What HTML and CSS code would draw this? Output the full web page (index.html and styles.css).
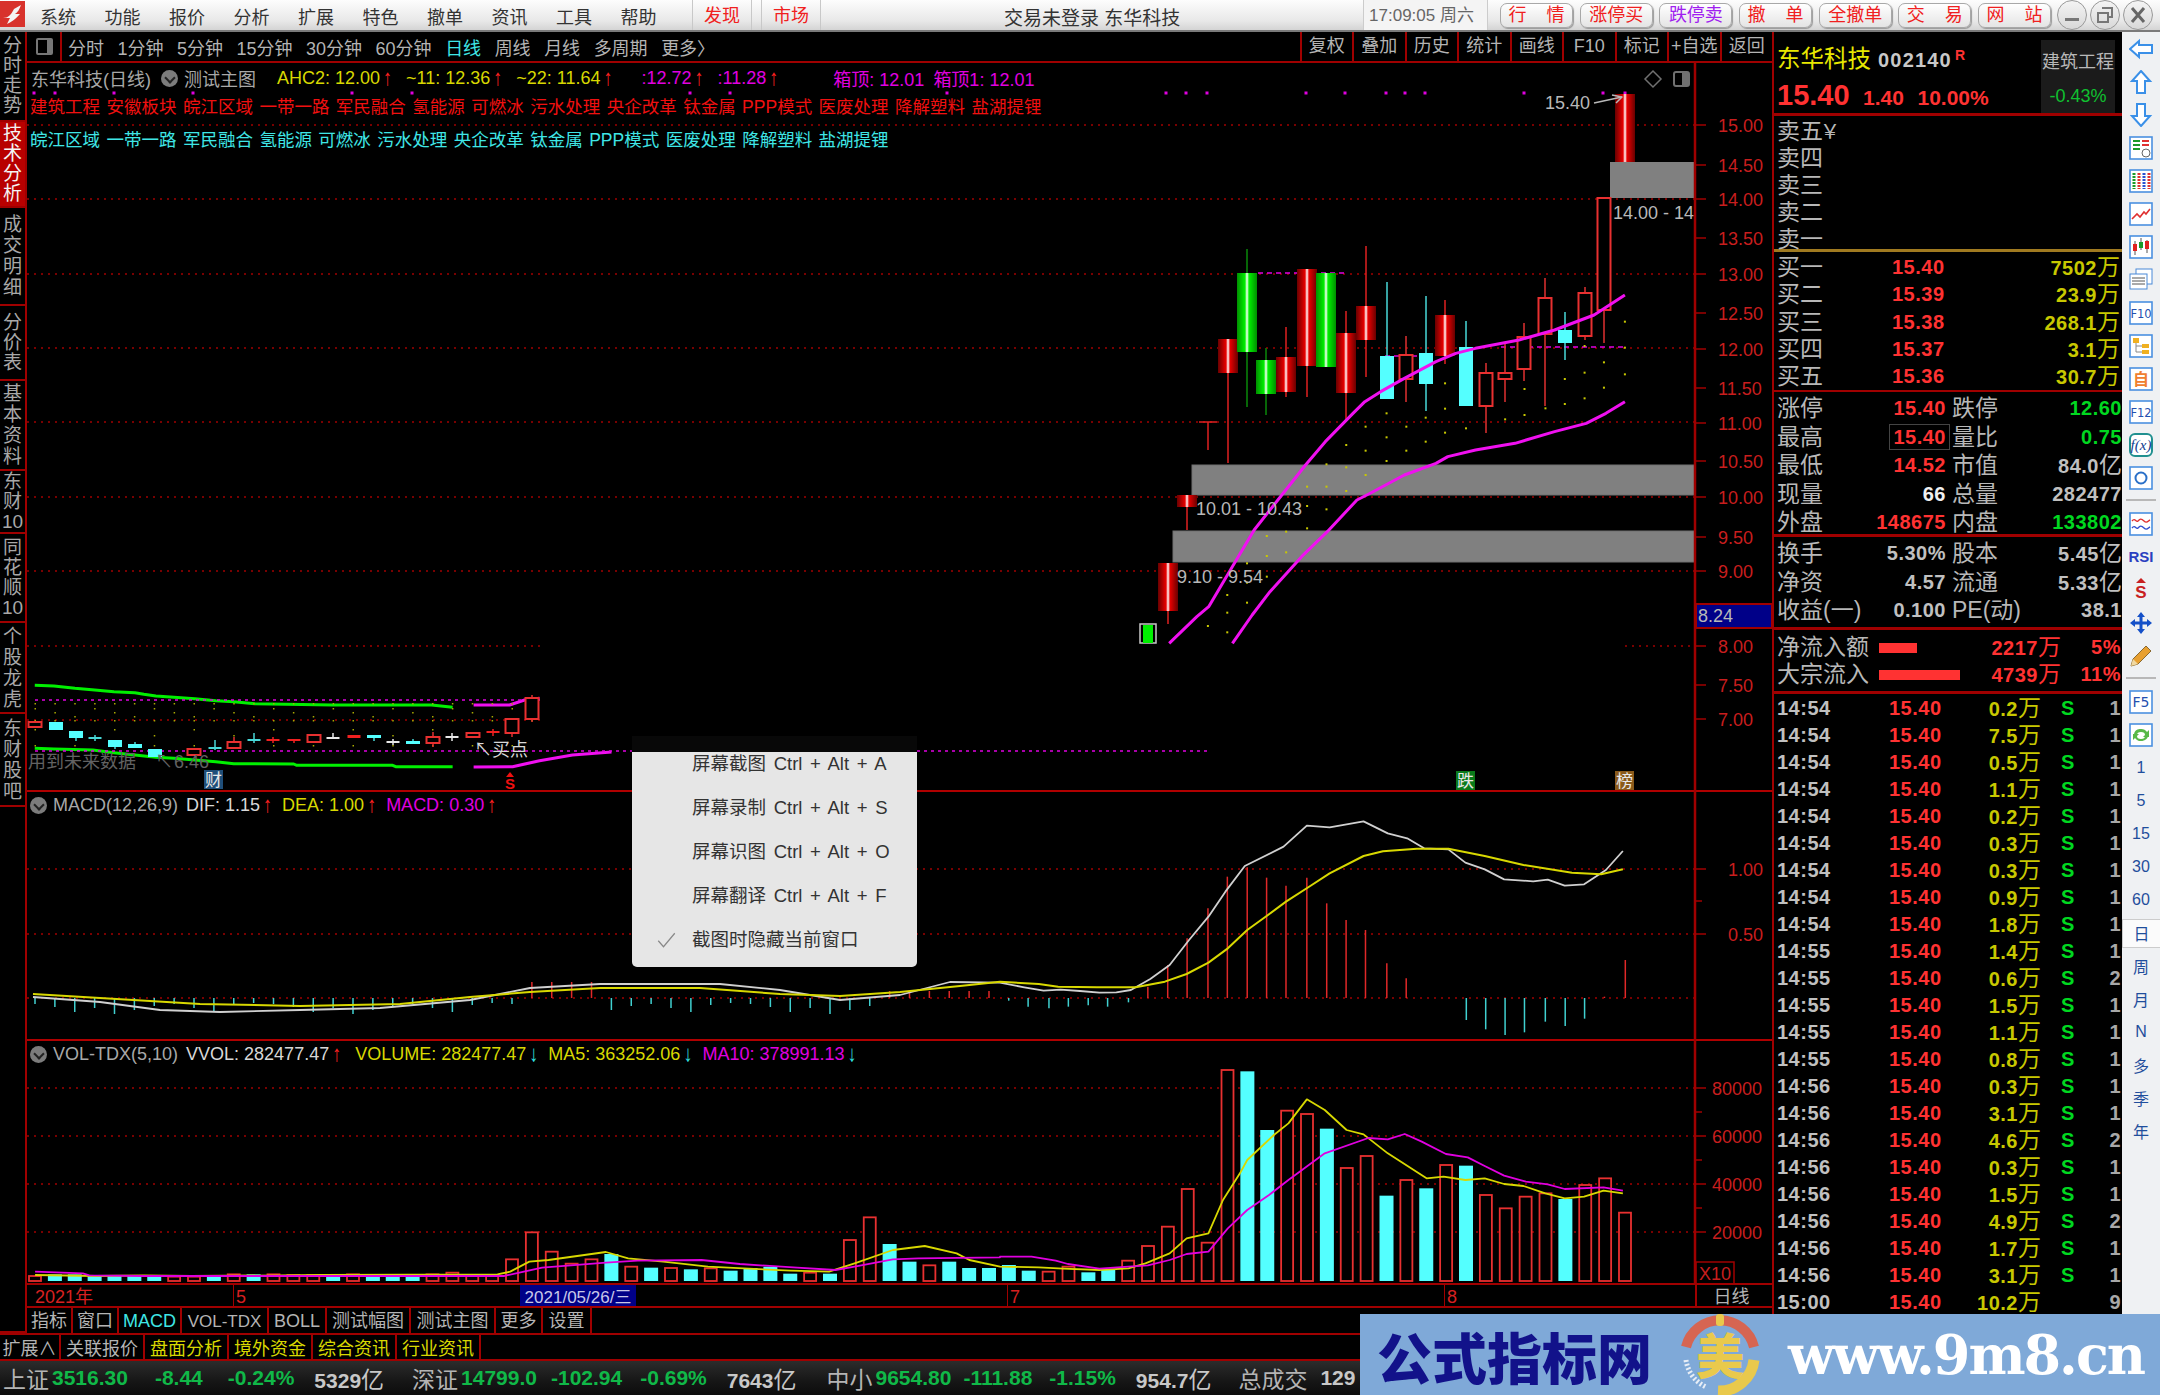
FILE: index.html
```html
<!DOCTYPE html>
<html lang="zh-CN">
<head>
    <meta charset="UTF-8">
    <title>东华科技 日线</title>
    <link rel="stylesheet" href="styles.css">
</head>
<body>
<div class="app">
    <header class="topbar">
        <svg class="logo" viewBox="0 0 25 26">
            <rect width="25" height="26" fill="#d8322c"/>
            <path d="M3 17 C8 17 11 14 14 8 L21 4 C19 9 18 11 15 13 L20 13 C15 19 11 21 7 23 L10 17 Z" fill="#f4f4f4"/>
        </svg>
        <nav class="menu">
            <span>系统</span><span>功能</span><span>报价</span><span>分析</span><span>扩展</span>
            <span>特色</span><span>撤单</span><span>资讯</span><span>工具</span><span>帮助</span>
        </nav>
        <div class="hot-tab hot-first">发现</div>
        <div class="hot-tab hot-second">市场</div>
        <div class="title">交易未登录 东华科技</div>
        <div class="clock">17:09:05 周六</div>
        <div class="quick">
            <button>行&nbsp;&nbsp;&nbsp;&nbsp;情</button><button>涨停买</button><button class="purple">跌停卖</button>
            <button>撤&nbsp;&nbsp;&nbsp;&nbsp;单</button><button>全撤单</button><button>交&nbsp;&nbsp;&nbsp;&nbsp;易</button><button>网&nbsp;&nbsp;&nbsp;&nbsp;站</button>
        </div>
        <div class="win-btns">
            <span class="win-btn"><svg viewBox="0 0 20 20"><rect x="3" y="13" width="14" height="3" fill="#777"/></svg></span>
            <span class="win-btn"><svg viewBox="0 0 20 20"><path d="M7 3h10v9h-4M3 8h10v9H3z" fill="none" stroke="#777" stroke-width="2"/></svg></span>
            <span class="win-btn"><svg viewBox="0 0 20 20"><path d="M4 3l12 14M16 3L4 17" stroke="#666" stroke-width="3"/></svg></span>
        </div>
    </header>

    <div class="body">
        <div class="left">
            <div class="upper">
                <aside class="side-tabs">
                    <div>分<br>时<br>走<br>势</div>
                    <div class="on">技<br>术<br>分<br>析</div>
                    <div>成<br>交<br>明<br>细</div>
                    <div>分<br>价<br>表</div>
                    <div>基<br>本<br>资<br>料</div>
                    <div>东<br>财<br>10</div>
                    <div>同<br>花<br>顺<br>10</div>
                    <div>个<br>股<br>龙<br>虎</div>
                    <div>东<br>财<br>股<br>吧</div>
                    <div></div>
                </aside>
                <section class="work">
                    <div class="toolbar">
                        <div class="toggle"><i></i></div>
                        <div class="periods">
                            <span>分时</span><span>1分钟</span><span>5分钟</span><span>15分钟</span><span>30分钟</span><span>60分钟</span>
                            <span class="cyan">日线</span><span>周线</span><span>月线</span><span>多周期</span><span>更多〉</span>
                        </div>
                        <div class="tools">
                            <span>复权</span><span>叠加</span><span>历史</span><span>统计</span><span>画线</span><span>F10</span><span>标记</span><span>+自选</span><span>返回</span>
                        </div>
                    </div>

                    <div class="panel panel-main">
                        <svg id="main-chart" class="chart" viewBox="27 63 1745 729"></svg>
                        <div class="head-line">
                            <span class="gray name">东华科技(日线)</span><i class="drop"></i><span class="gray">测试主图</span>
                            <span class="yellow ind-a">AHC2: 12.00<b class="up">↑</b></span>
                            <span class="yellow ind-b">~11: 12.36<b class="up">↑</b></span>
                            <span class="yellow ind-b">~22: 11.64<b class="up">↑</b></span>
                            <span class="magenta ind-e">:12.72<b class="up">↑</b></span>
                            <span class="magenta ind-b">:11.28<b class="up">↑</b></span>
                            <span class="magenta ind-c">箱顶: 12.01</span>
                            <span class="magenta ind-d">箱顶1: 12.01</span>
                        </div>
                        <div class="concept red">建筑工程 安徽板块 皖江区域 一带一路 军民融合 氢能源 可燃冰 污水处理 央企改革 钛金属 PPP模式 医废处理 降解塑料 盐湖提锂</div>
                        <div class="concept cyan second">皖江区域 一带一路 军民融合 氢能源 可燃冰 污水处理 央企改革 钛金属 PPP模式 医废处理 降解塑料 盐湖提锂</div>
                    </div>

                    <div class="panel panel-macd">
                        <svg id="macd-chart" class="chart" viewBox="27 792 1745 249"></svg>
                        <div class="head-line">
                            <i class="drop first"></i><span class="gray">MACD(12,26,9)</span>
                            <span class="light ind-a2">DIF: 1.15<b class="up">↑</b></span>
                            <span class="yellow ind-b2">DEA: 1.00<b class="up">↑</b></span>
                            <span class="magenta ind-b2">MACD: 0.30<b class="up">↑</b></span>
                        </div>
                    </div>

                    <div class="panel panel-vol">
                        <svg id="vol-chart" class="chart" viewBox="27 1041 1745 244"></svg>
                        <div class="head-line">
                            <i class="drop first"></i><span class="gray">VOL-TDX(5,10)</span>
                            <span class="light ind-a2">VVOL: 282477.47<b class="up">↑</b></span>
                            <span class="yellow ind-b3">VOLUME: 282477.47<b class="down">↓</b></span>
                            <span class="yellow ind-b2">MA5: 363252.06<b class="down">↓</b></span>
                            <span class="magenta ind-b2">MA10: 378991.13<b class="down">↓</b></span>
                        </div>
                    </div>

                    <div class="xaxis">
                        <span class="x-year">2021年</span>
                        <span class="x-mark x-5">5</span>
                        <span class="x-date">2021/05/26/三</span>
                        <span class="x-mark x-7">7</span>
                        <span class="x-mark x-8">8</span>
                        <span class="x-unit">日线</span>
                    </div>

                    <div class="cells index-tabs">
                        <span>指标</span><span>窗口</span><span class="cyan">MACD</span><span>VOL-TDX</span><span>BOLL</span><span>测试幅图</span><span>测试主图</span><span>更多</span><span>设置</span>
                    </div>
                </section>
            </div>

            <div class="cells ext-tabs">
                <span>扩展∧</span><span>关联报价</span><span class="yellow">盘面分析</span><span class="yellow">境外资金</span><span class="yellow">综合资讯</span><span class="yellow">行业资讯</span>
            </div>

            <footer class="status">
                <span class="cn">上证</span><b class="st-up">3516.30</b><b>-8.44</b><b>-0.24%</b><em>5329<small>亿</small></em>
                <span class="cn">深证</span><b class="st-up">14799.0</b><b>-102.94</b><b>-0.69%</b><em>7643<small>亿</small></em>
                <span class="cn">中小</span><b class="st-up">9654.80</b><b>-111.88</b><b>-1.15%</b><em>954.7<small>亿</small></em>
                <span class="cn">总成交</span><em>129</em>
            </footer>
        </div>

        <aside class="quote">
            <div class="q-head">
                <div class="q-stock">
                    <div class="q-name"><span class="yellow-b">东华科技</span><b class="q-code">002140</b><b class="q-r">R</b></div>
                    <div class="q-price"><b class="big">15.40</b><b>1.40</b><b>10.00%</b></div>
                </div>
                <div class="q-sector">
                    <span>建筑工程</span>
                    <b>-0.43%</b>
                </div>
            </div>

            <div class="q-sell">
                <div>卖五<span class="yen">￥</span></div><div>卖四</div><div>卖三</div><div>卖二</div><div>卖一</div>
            </div>

            <div class="q-buy">
                <div><span>买一</span><b class="r">15.40</b><b class="y">7502<i>万</i></b></div>
                <div><span>买二</span><b class="r">15.39</b><b class="y">23.9<i>万</i></b></div>
                <div><span>买三</span><b class="r">15.38</b><b class="y">268.1<i>万</i></b></div>
                <div><span>买四</span><b class="r">15.37</b><b class="y">3.1<i>万</i></b></div>
                <div><span>买五</span><b class="r">15.36</b><b class="y">30.7<i>万</i></b></div>
            </div>

            <div class="q-stats">
                <div><span>涨停</span><b class="r">15.40</b><span>跌停</span><b class="g">12.60</b></div>
                <div><span>最高</span><b class="r"><u>15.40</u></b><span>量比</span><b class="g">0.75</b></div>
                <div><span>最低</span><b class="r">14.52</b><span>市值</span><b>84.0<i>亿</i></b></div>
                <div><span>现量</span><b class="w">66</b><span>总量</span><b>282477</b></div>
                <div><span>外盘</span><b class="r">148675</b><span>内盘</span><b class="g">133802</b></div>
            </div>

            <div class="q-stats q-fin">
                <div><span>换手</span><b>5.30%</b><span>股本</span><b>5.45<i>亿</i></b></div>
                <div><span>净资</span><b>4.57</b><span>流通</span><b>5.33<i>亿</i></b></div>
                <div><span>收益(一)</span><b>0.100</b><span>PE(动)</span><b>38.1</b></div>
            </div>

            <div class="q-flow">
                <div><span>净流入额</span><p><i style="width:38px"></i></p><b>2217<em>万</em></b><b>5%</b></div>
                <div><span>大宗流入</span><p><i style="width:81px"></i></p><b>4739<em>万</em></b><b>11%</b></div>
            </div>

            <div class="q-trades" id="trades"></div>
        </aside>

        <aside class="strip">
            <span class="ico"><svg viewBox="0 0 24 24"><path class="arr" d="M1 12L10 4v4h13v8H10v4z"/></svg></span>
            <span class="ico"><svg viewBox="0 0 24 24"><path class="arr" d="M12 1l9 10h-5v12H8V11H3z"/></svg></span>
            <span class="ico"><svg viewBox="0 0 24 24"><path class="arr" d="M12 23l9-10h-5V1H8v12H3z"/></svg></span>
            <span class="ico"><svg viewBox="0 0 24 24"><rect class="frm" x="1" y="1" width="22" height="22"/><path d="M4 5h7M4 9h7M4 13h7" stroke="#1a9a2a" stroke-width="2"/><path d="M13 5h7M13 9h7" stroke="#e03030" stroke-width="2"/><circle cx="17" cy="17" r="4" fill="#fff" stroke="#666"/></svg></span>
            <span class="ico"><svg viewBox="0 0 24 24"><rect class="frm" x="1" y="1" width="22" height="22"/><path d="M5 4v16" stroke="#1a9a2a" stroke-width="3" stroke-dasharray="2 1"/><path d="M10 4v16" stroke="#e03030" stroke-width="3" stroke-dasharray="2 1"/><path d="M15 4v16" stroke="#2a50d0" stroke-width="3" stroke-dasharray="2 1"/><path d="M20 4v16" stroke="#e03030" stroke-width="3" stroke-dasharray="2 1"/></svg></span>
            <span class="ico"><svg viewBox="0 0 24 24"><rect class="frm" x="1" y="1" width="22" height="22"/><path d="M3 17l5-5 3 3 4-5 2 2 4-5" fill="none" stroke="#e03030" stroke-width="1.6"/></svg></span>
            <span class="ico"><svg viewBox="0 0 24 24"><rect class="frm" x="1" y="1" width="22" height="22"/><path d="M6 6v14M12 3v12M18 5v13" stroke="#555"/><rect x="4" y="9" width="4" height="7" fill="#e02020"/><rect x="10" y="7" width="4" height="6" fill="#1a9a2a"/><rect x="16" y="6" width="4" height="8" fill="#e02020"/></svg></span>
            <span class="ico"><svg viewBox="0 0 24 24"><rect x="7" y="1" width="16" height="15" fill="#fff" stroke="#4a8ad8"/><rect x="1" y="6" width="17" height="15" fill="#fff" stroke="#4a8ad8"/><path d="M3 10h13M3 13h13M3 16h13" stroke="#555"/></svg></span>
            <span class="ico"><svg viewBox="0 0 24 24"><rect class="frm" x="1" y="1" width="22" height="22"/><text class="ico-text" x="12" y="16.500" font-size="11.500">F10</text></svg></span>
            <span class="ico"><svg viewBox="0 0 24 24"><rect class="frm" x="1" y="1" width="22" height="22"/><rect x="4" y="4" width="6" height="5" fill="#f0b020"/><rect x="13" y="10" width="7" height="4" fill="#f0b020"/><rect x="13" y="16" width="7" height="4" fill="#f0b020"/><path d="M7 9v9h6M7 12h6" fill="none" stroke="#888"/></svg></span>
            <span class="ico"><svg viewBox="0 0 24 24"><rect class="frm" x="1" y="1" width="22" height="22"/><text class="ico-text orange" x="12" y="18" font-size="16">自</text></svg></span>
            <span class="ico"><svg viewBox="0 0 24 24"><rect class="frm" x="1" y="1" width="22" height="22"/><text class="ico-text" x="12" y="16.500" font-size="11.500">F12</text></svg></span>
            <span class="ico"><svg viewBox="0 0 24 24"><rect class="frm teal" x="1" y="1" width="22" height="22" rx="5"/><text class="ico-text navy" x="12" y="17" font-size="13">f(x)</text></svg></span>
            <span class="ico"><svg viewBox="0 0 24 24"><rect class="frm" x="1" y="1" width="22" height="22"/><circle cx="12" cy="12" r="5.500" fill="none" stroke="#2a70c8" stroke-width="2"/></svg></span>
            <i class="sep"></i>
            <span class="ico"><svg viewBox="0 0 24 24"><rect class="frm" x="1" y="1" width="22" height="22"/><path d="M3 9c3-4 4 2 6 0s3-3 6 0 4 0 6-1" fill="none" stroke="#e03030" stroke-width="1.4"/><path d="M3 16c3-4 4 2 6 0s3-3 6 0 4 0 6-1" fill="none" stroke="#3050d0" stroke-width="1.4"/></svg></span>
            <span class="ico"><svg viewBox="0 0 24 24"><text class="ico-text rsi" x="12" y="17" font-size="13">RSI</text></svg></span>
            <span class="ico"><svg viewBox="0 0 24 24"><path d="M12 0l5 5H7z" fill="#c82020"/><text class="ico-text red-s" x="12" y="20" font-size="17">S</text></svg></span>
            <span class="ico"><svg viewBox="0 0 24 24"><path d="M12 1l4 5h-2.500v4.500H18V8l5 4-5 4v-2.500h-4.500V18H16l-4 5-4-5h2.500v-4.500H6V16l-5-4 5-4v2.500h4.500V6H8z" fill="#1450c8"/></svg></span>
            <span class="ico"><svg viewBox="0 0 24 24"><path d="M2 22l2-7L17 2l5 5L9 20z" fill="#e8a030" stroke="#8a6a30"/><path d="M2 22l2-7 5 5z" fill="#f0d8a0"/></svg></span>
            <i class="sep"></i>
            <span class="ico"><svg viewBox="0 0 24 24"><rect class="frm" x="1" y="1" width="22" height="22"/><text class="ico-text" x="12" y="17" font-size="14">F5</text></svg></span>
            <span class="ico"><svg viewBox="0 0 24 24"><rect class="frm" x="1" y="1" width="22" height="22"/><path d="M5 11a7 6 0 0 1 13-2l2-2v7h-6l2-2a4 3 0 0 0-8 0zM19 13a7 6 0 0 1-13 2l-2 2v-6h6l-2 2a4 3 0 0 0 8 0z" fill="#58b848"/></svg></span>
            <span class="ico num">1</span><span class="ico num">5</span><span class="ico num">15</span><span class="ico num">30</span><span class="ico num">60</span>
            <span class="ico num sel">日</span><span class="ico num">周</span><span class="ico num">月</span><span class="ico num">N</span><span class="ico num">多</span><span class="ico num">季</span><span class="ico num">年</span>
        </aside>
    </div>

    <div class="shot-menu">
        <div>屏幕截图 Ctrl + Alt + A</div>
        <div>屏幕录制 Ctrl + Alt + S</div>
        <div>屏幕识图 Ctrl + Alt + O</div>
        <div>屏幕翻译 Ctrl + Alt + F</div>
        <div><svg class="tick" viewBox="0 0 24 24"><path d="M1 13l7 8L23 3" fill="none" stroke="#888" stroke-width="1.6"/></svg>截图时隐藏当前窗口</div>
    </div>

    <div class="banner">
        <span class="banner-cn">公式指标网</span>
        <svg class="banner-logo" viewBox="0 0 84 82">
            <path d="M8 33 A35 35 0 0 1 76 33" fill="none" stroke="#d66552" stroke-width="10"/>
            <path d="M76 46 A35 35 0 0 1 40 77" fill="none" stroke="#e9c94c" stroke-width="11"/>
            <path d="M8 46 A35 35 0 0 0 28 73" fill="none" stroke="#e8eef6" stroke-width="5" stroke-dasharray="2 2"/>
            <rect x="38" y="0" width="8" height="12" rx="3" fill="#e9c94c"/>
            <text x="42" y="60" class="banner-mark">美</text>
        </svg>
        <span class="banner-url">www.9m8.cn</span>
    </div>
</div>
<script src="chart.js"></script>
</body>
</html>
```

FILE: styles.css
```css
* {
    margin: 0;
    padding: 0;
    box-sizing: border-box;
}

html, body {
    width: 2160px;
    height: 1395px;
    overflow: hidden;
    background: #000;
}

body {
    font-family: "Liberation Sans", "Noto Sans CJK SC", sans-serif;
    font-size: 18px;
    color: #b4b4b4;
}

.app {
    position: relative;
    width: 2160px;
    height: 1395px;
    display: flex;
    flex-direction: column;
}

/* colours used all over */
.cyan { color: #3fe6e6; }
.yellow { color: #d8d800; }
.magenta { color: #e000e0; }
.red { color: #f01010; }
.gray { color: #a8a8a8; }
.light { color: #d8d8d8; }

/* top bar */
.topbar {
    height: 32px;
    display: flex;
    align-items: center;
    background: linear-gradient(#fdfdfd, #e8e8e8 70%, #d4d4d4);
    border-bottom: 2px solid #7a7a7a;
    color: #333;
}

.logo {
    width: 25px;
    height: 26px;
    flex: none;
    margin-bottom: 2px;
}

.menu {
    display: flex;
    gap: 28.500px;
    margin-left: 15px;
    width: 652px;
    font-size: 18px;
    padding-top: 2px;
}

.hot-tab {
    height: 30px;
    width: 60px;
    line-height: 32px;
    text-align: center;
    color: #f02020;
    border-left: 1px solid #c8c8c8;
    border-right: 1px solid #c8c8c8;
}

.hot-second {
    margin-left: 9px;
}

.title {
    flex: 1;
    text-align: center;
    font-size: 19px;
    color: #333;
    padding-top: 2px;
}

.clock {
    width: 125px;
    height: 30px;
    line-height: 32px;
    padding-left: 5px;
    background: #f4f4f4;
    border-left: 1px solid #ccc;
    border-right: 1px solid #ccc;
    color: #666;
    font-size: 17px;
    white-space: nowrap;
}

.quick {
    display: flex;
    gap: 6.670px;
    margin-left: 12px;
}

.quick button {
    width: 73px;
    height: 25px;
    border: 1px solid #a8a8a8;
    border-radius: 7px;
    background: linear-gradient(#fff, #e4e4e4);
    box-shadow: 1px 1px 1px #999;
    color: #f02020;
    font-family: inherit;
    font-size: 18px;
    line-height: 22px;
    white-space: nowrap;
}

.quick button.purple {
    color: #a020f0;
}

.win-btns {
    display: flex;
    gap: 3px;
    margin: 0 7px 0 6px;
}

.win-btn {
    width: 30px;
    height: 30px;
    border: 1px solid #999;
    border-radius: 50%;
    background: linear-gradient(#f4f4f4, #d8d8d8);
    padding: 4px;
}

.win-btn svg {
    display: block;
}

/* body */
.body {
    flex: 1;
    display: flex;
    min-height: 0;
}

.left {
    width: 1772px;
    display: flex;
    flex-direction: column;
}

.upper {
    flex: 1;
    display: flex;
    min-height: 0;
}

.side-tabs {
    width: 27px;
    display: grid;
    grid-template-rows: 90px 86px 98px 75px 90px 63px 89px 91px 93px 1fr;
    border-right: 2px solid #a00000;
    border-bottom: 2px solid #a00000;
}

.side-tabs div {
    display: flex;
    align-items: center;
    justify-content: center;
    text-align: center;
    border-bottom: 2px solid #a00000;
    font-size: 19px;
    line-height: 20px;
    color: #a8a8a8;
    overflow: hidden;
}

.side-tabs div:nth-child(3),
.side-tabs div:nth-child(5),
.side-tabs div:nth-child(8),
.side-tabs div:nth-child(9) {
    line-height: 21px;
}

.side-tabs div:last-child {
    border-bottom: 0;
}

.side-tabs .on {
    background: #b80000;
    color: #f4f4f4;
}

.work {
    width: 1745px;
    display: flex;
    flex-direction: column;
}

.toolbar {
    height: 31px;
    display: flex;
    align-items: center;
    border-bottom: 2px solid #a00000;
}

.toggle {
    width: 35px;
    height: 29px;
    border-right: 2px solid #a00000;
    padding: 6px 0 0 9px;
}

.toggle i {
    display: block;
    width: 17px;
    height: 17px;
    border: 2px solid #777;
    border-right-width: 6px;
    border-radius: 2px;
}

.periods {
    display: flex;
    gap: 13.500px;
    margin-left: 6px;
    white-space: nowrap;
}

.tools {
    display: flex;
    margin-left: auto;
    height: 29px;
}

.tools span {
    width: 52.500px;
    text-align: center;
    line-height: 29px;
    border-left: 2px solid #a00000;
}

.panel {
    position: relative;
    flex: none;
    border-bottom: 2px solid #b00000;
}

.panel-main {
    height: 729px;
}

.panel-macd {
    height: 249px;
}

.panel-vol {
    height: 244px;
    border-bottom: 2px solid #a00000;
}

.chart {
    position: absolute;
    left: 0;
    top: 0;
    width: 1745px;
    display: block;
}

.panel-main .chart { height: 729px; }
.panel-macd .chart { height: 249px; }
.panel-vol .chart { height: 244px; }

.head-line {
    position: relative;
    display: flex;
    align-items: center;
    height: 26px;
    padding-left: 4px;
    white-space: nowrap;
}

.panel-main .head-line {
    height: 30px;
}

.head-line b {
    display: inline-block;
    font-weight: bold;
    margin-left: 3px;
    transform: scaleY(1.25);
}

.head-line .up { color: #ff2020; }
.head-line .down { color: #30e0e0; }

.drop {
    width: 17px;
    height: 17px;
    margin: 0 6px 0 10px;
    border-radius: 50%;
    background: #7c7c7c;
    position: relative;
}

.drop.first {
    margin-left: -1px;
    margin-right: 6px;
}

.drop::after {
    content: "";
    position: absolute;
    left: 5px;
    top: 4px;
    width: 6px;
    height: 6px;
    border-right: 2px solid #222;
    border-bottom: 2px solid #222;
    transform: rotate(45deg);
}

.ind-a { margin-left: 21px; }
.ind-b { margin-left: 14px; }
.ind-c { margin-left: 55px; }
.ind-d { margin-left: 9px; }
.ind-e { margin-left: 29px; }
.ind-a2 { margin-left: 8px; }
.ind-b2 { margin-left: 10px; }
.ind-b3 { margin-left: 14px; }

.concept {
    position: relative;
    padding-left: 3px;
    height: 29px;
    line-height: 29px;
    font-size: 17.500px;
    word-spacing: 1.600px;
    white-space: nowrap;
}

.concept.second {
    margin-top: 4px;
}

.xaxis {
    position: relative;
    height: 23px;
    border-bottom: 2px solid #a00000;
    line-height: 25px;
}

.xaxis span {
    position: absolute;
    top: 0;
    height: 21px;
}

.x-year { left: 8px; color: #d82020; }
.x-mark { color: #d82020; padding-left: 2px; border-left: 1px solid #a00000; }
.x-5 { left: 206px; }
.x-7 { left: 980px; }
.x-8 { left: 1417px; }

.x-date {
    left: 493px;
    width: 116px;
    text-align: center;
    background: #000088;
    color: #c8c8e8;
    font-size: 17px;
    white-space: nowrap;
}

.x-unit {
    left: 1668px;
    width: 77px;
    text-align: center;
    border-left: 2px solid #a00000;
    color: #b4b4b4;
    padding-right: 6px;
}

.cells {
    display: flex;
    height: 25px;
    line-height: 27px;
    white-space: nowrap;
}

.cells span {
    text-align: center;
    border-right: 2px solid #a00000;
}

.index-tabs span:nth-child(1) { width: 46px; }
.index-tabs span:nth-child(2) { width: 46px; }
.index-tabs span:nth-child(3) { width: 63px; }
.index-tabs span:nth-child(4) { width: 87px; font-size: 17px; }
.index-tabs span:nth-child(5) { width: 58px; }
.index-tabs span:nth-child(6) { width: 84px; }
.index-tabs span:nth-child(7) { width: 85px; }
.index-tabs span:nth-child(8) { width: 47px; }
.index-tabs span:nth-child(9) { width: 49px; }

.ext-tabs {
    height: 28px;
    line-height: 29px;
    border-top: 2px solid #a00000;
    border-bottom: 2px solid #a00000;
}

.ext-tabs span { width: 84px; }
.ext-tabs span:first-child { width: 61px; }

.status {
    height: 34px;
    display: flex;
    align-items: center;
    gap: 20px;
    padding-left: 3px;
    background: linear-gradient(#2c2c2c, #161616 60%, #0c0c0c);
    white-space: nowrap;
    font-size: 21px;
}

.status b {
    color: #10b848;
}

.status em {
    font-style: normal;
    font-weight: bold;
    color: #c8c8c8;
}

.status small {
    font-size: 23px;
    font-weight: normal;
}

.status .cn {
    font-size: 23px;
    color: #b4b4b4;
    margin-right: -17px;
}

/* the index block columns do not share a spacing in the original */
.status > :nth-child(3) { margin-left: 7px; }
.status > :nth-child(4) { margin-left: 5px; }
.status > :nth-child(6) { margin-left: 8px; }
.status > :nth-child(8) { margin-left: -6px; }
.status > :nth-child(9) { margin-left: -2px; }
.status > :nth-child(11) { margin-left: 10px; }
.status > :nth-child(13) { margin-left: -8px; }
.status > :nth-child(14) { margin-left: -3px; }
.status > :nth-child(16) { margin-left: 7px; }
.status > :nth-child(17) { margin-left: 10px; }

/* right quote panel */
.quote {
    width: 350px;
    border-left: 2px solid #a00000;
    font-size: 23px;
    color: #b8b8b8;
    overflow: hidden;
}

.quote b {
    font-size: 20px;
    letter-spacing: 0.500px;
    text-align: right;
    color: #c0c0c0;
    white-space: nowrap;
}

.quote b i,
.quote b em {
    font-style: normal;
    font-weight: normal;
    font-size: 23px;
    letter-spacing: 0;
}

.quote .r { color: #ff3232; }
.quote .g { color: #00d820; }
.quote .y { color: #c8c800; }
.quote .w { color: #f0f0f0; }

.q-head {
    height: 84px;
    display: flex;
    border-bottom: 3px solid #a00000;
}

.q-stock {
    width: 267px;
    padding: 12px 0 0 3px;
}

.q-name {
    display: flex;
    align-items: baseline;
    height: 32px;
}

.yellow-b {
    color: #e8e800;
    font-size: 23.500px;
    line-height: 30px;
}

.quote .q-code {
    margin-left: 7px;
    color: #c8c8c8;
    font-size: 20px;
    letter-spacing: 1.200px;
}

.quote .q-r {
    color: #ff3232;
    font-size: 14px;
    margin-left: 3px;
    align-self: flex-start;
    line-height: 22px;
}

.q-price {
    display: flex;
    align-items: baseline;
    gap: 13.500px;
    padding-top: 3px;
}

.quote .q-price b {
    color: #ff3232;
    font-size: 21px;
    letter-spacing: 0;
}

.quote .q-price .big {
    font-size: 29px;
}

.q-sector {
    width: 74px;
    height: 73px;
    margin-top: 8px;
    background: #1b1b1b;
    text-align: center;
    display: flex;
    flex-direction: column;
    justify-content: space-around;
    font-size: 18px;
}

.quote .q-sector b {
    color: #10c030;
    font-size: 18px;
    font-weight: normal;
    text-align: center;
    letter-spacing: 0;
}

.q-sell {
    height: 136px;
    padding: 2px 0 0 3px;
    border-bottom: 3px solid #a07a20;
}

.q-sell div {
    height: 27px;
    line-height: 27px;
}

.yen {
    font-size: 20px;
    margin-left: -3px;
}

.q-buy {
    height: 140px;
    padding: 2px 2px 0 3px;
    border-bottom: 2px solid #a00000;
}

.q-buy div {
    height: 27.300px;
    display: grid;
    grid-template-columns: 115px 60px 1fr;
    line-height: 27px;
}

.q-buy b {
    text-align: left;
}

.q-buy b.y {
    text-align: right;
}

.q-stats {
    height: 145px;
    padding: 2px 0 0 3px;
    border-bottom: 3px solid #a00000;
}

.q-stats div {
    height: 28.600px;
    display: grid;
    grid-template-columns: 70px 99px 70px 106px;
    line-height: 28px;
}

.q-stats div span {
    white-space: nowrap;
}

.q-stats div span:nth-child(3) {
    padding-left: 6px;
}

.q-stats u {
    display: inline-block;
    text-decoration: none;
    border: 1px solid #444;
    height: 26px;
    line-height: 25px;
    padding: 0 3px;
    margin-right: -4px;
}

.q-fin {
    height: 93px;
}

.q-flow {
    height: 64px;
    padding: 4px 0 0 3px;
    border-bottom: 3px solid #a00000;
}

.q-flow div {
    height: 27px;
    display: grid;
    grid-template-columns: 102px 100px 82px 60px;
    line-height: 27px;
    white-space: nowrap;
}

.q-flow b {
    color: #ff3232 !important;
}

.q-flow p {
    display: flex;
    align-items: center;
}

.q-flow p i {
    display: block;
    height: 10px;
    background: #ff3232;
}

.q-trades {
    padding: 1px 0 0 3px;
}

.q-row {
    height: 27px;
    display: grid;
    grid-template-columns: 112px 55px 117px 30px 30px;
    line-height: 27px;
}

.quote .q-row .time {
    text-align: left;
    color: #c0c0c0;
}

.quote .q-row .price {
    text-align: left;
    color: #ff3232;
}

.quote .q-row .vol {
    color: #c8c800;
    padding-right: 20px;
}

.quote .q-row .side {
    text-align: left;
    color: #00d820;
}

.quote .q-row .cnt {
    color: #a8a8a8;
}

/* icon strip */
.strip {
    width: 38px;
    background: #eff1f3;
    padding-top: 0.500px;
    display: flex;
    flex-direction: column;
    align-items: center;
}

.ico {
    flex: none;
    width: 38px;
    height: 33px;
    display: flex;
    align-items: center;
    justify-content: center;
}

.ico svg {
    width: 24px;
    height: 24px;
}

.ico .arr {
    fill: #fff;
    stroke: #3a90e8;
    stroke-width: 2;
}

.frm {
    fill: #fff;
    stroke: #4a90e0;
    stroke-width: 1.600;
}

.frm.teal {
    stroke: #209090;
    stroke-width: 2;
}

.ico-text {
    fill: #2450b0;
    text-anchor: middle;
    font-family: "DejaVu Sans", sans-serif;
}

.ico-text.orange { fill: #f08030; font-family: "Noto Sans CJK SC", sans-serif; font-weight: bold; }
.ico-text.navy { fill: #104090; font-style: italic; font-family: "Liberation Serif", serif; font-size: 15px; }
.ico-text.rsi { fill: #2a40c0; font-weight: bold; font-family: "Liberation Sans", sans-serif; font-size: 15px; }
.ico-text.red-s { fill: #c82020; font-weight: bold; font-family: "Liberation Sans", sans-serif; }

.sep {
    flex: none;
    width: 30px;
    height: 12px;
    border-bottom: 2px solid #b8b8b8;
    margin-bottom: 1px;
    transform: translateY(-6px);
}

.num {
    color: #1f4e9c;
    font-size: 16px;
}

.num.sel {
    background: #fbfbfb;
    border: 1px solid #ccc;
    border-right: 0;
    height: 29px;
    margin: 2px 0;
}

/* screenshot popup, it floats over the charts */
.shot-menu {
    position: absolute;
    left: 632px;
    top: 752px;
    width: 285px;
    height: 215px;
    background: #e6e6e6;
    border-radius: 0 0 5px 5px;
    color: #333;
    padding: 0 0 0 60px;
    font-size: 18.500px;
    word-spacing: 2.500px;
    line-height: 44px;
}

.shot-menu::before {
    content: "";
    position: absolute;
    left: 0;
    right: 0;
    top: -16px;
    height: 16px;
    background: #080808;
}

.shot-menu div {
    position: relative;
    height: 44px;
    top: -10px;
    white-space: nowrap;
}

.tick {
    position: absolute;
    left: -37px;
    top: 13px;
    width: 23px;
    height: 18px;
}

/* watermark in the corner */
.banner {
    position: absolute;
    left: 1360px;
    top: 1314px;
    right: 0;
    bottom: 0;
    background: #7fa9d8;
    display: flex;
    align-items: center;
}

.banner-cn {
    margin-left: 17px;
    font-family: "Noto Sans CJK SC", sans-serif;
    font-weight: 900;
    font-size: 55px;
    line-height: 80px;
    color: #12128a;
    letter-spacing: 0;
    white-space: nowrap;
}

.banner-logo {
    width: 84px;
    height: 82px;
    margin-left: 26px;
    flex: none;
}

.banner-mark {
    fill: #e9c94c;
    font-family: "Noto Sans CJK SC", sans-serif;
    font-weight: 900;
    font-size: 48px;
    text-anchor: middle;
}

.banner-url {
    margin-left: 26px;
    font-family: "DejaVu Serif", serif;
    font-weight: bold;
    font-size: 54px;
    color: #fff;
    letter-spacing: -2px;
    white-space: nowrap;
}

/* svg text in the charts */
.axis-text {
    fill: #c81e1e;
    font-size: 18px;
}

.note-text {
    fill: #b8b8b8;
    font-size: 18px;
}

.note-dim {
    fill: #626262;
    font-size: 18px;
}

.note-white {
    fill: #d8d8d8;
    font-size: 18px;
}

.badge-text {
    fill: #e8e8e8;
    font-size: 17px;
    text-anchor: middle;
}

.s-mark {
    fill: #f01010;
    font-size: 15px;
    font-weight: bold;
    text-anchor: middle;
}
```

FILE: chart.js
```js
const NS = 'http://www.w3.org/2000/svg';
const STEP = 19.875;
const GRID = '#a00000';

function add(svg, tag, attrs, text) {
    const node = document.createElementNS(NS, tag);
    for (const key in attrs) {
        node.setAttribute(key, attrs[key]);
    }
    if (text !== undefined) {
        node.textContent = text;
    }
    svg.appendChild(node);
    return node;
}

function seg(svg, x1, y1, x2, y2, color, width) {
    add(svg, 'line', { x1, y1, x2, y2, stroke: color, 'stroke-width': width || 1.5 });
}

function dotted(svg, y, x1, x2, color, dash) {
    add(svg, 'line', {
        x1, y1: y, x2, y2: y,
        stroke: color || GRID,
        'stroke-width': 1.5,
        'stroke-dasharray': dash || '2 5'
    });
}

function poly(svg, pts, color, width) {
    add(svg, 'polyline', {
        points: pts.map(p => p.join(',')).join(' '),
        fill: 'none',
        stroke: color,
        'stroke-width': width,
        'stroke-linejoin': 'round'
    });
}

function gradient(svg, id, edge, mid) {
    const defs = add(svg, 'defs', {});
    const g = add(defs, 'linearGradient', { id });
    add(g, 'stop', { offset: '0', 'stop-color': edge });
    add(g, 'stop', { offset: '0.4', 'stop-color': mid });
    add(g, 'stop', { offset: '0.5', 'stop-color': '#ffffff' });
    add(g, 'stop', { offset: '0.6', 'stop-color': mid });
    add(g, 'stop', { offset: '1', 'stop-color': edge });
}

// kind: r red filled, g green filled, c cyan, h red hollow
function candle(svg, [x, top, bottom, wickTop, wickBottom, kind], scale) {
    const w = { r: 20, g: 20, c: 14, h: 13 }[kind] * (scale || 1);
    const wickColor = { r: '#e02020', g: '#0a8a0a', c: '#48d8d8', h: '#e03030' }[kind];
    if (wickTop !== null && wickBottom !== null) {
        seg(svg, x, wickTop, x, wickBottom, wickColor);
    }
    if (kind === 'h') {
        add(svg, 'rect', { x: x - w / 2, y: top, width: w, height: bottom - top, fill: '#000', stroke: '#e83030', 'stroke-width': 2 });
    } else if (kind === 'c') {
        add(svg, 'rect', { x: x - w / 2, y: top, width: w, height: bottom - top, fill: '#54ffff' });
    } else {
        add(svg, 'rect', { x: x - w / 2, y: top, width: w, height: bottom - top, fill: kind === 'r' ? 'url(#red-bar)' : 'url(#green-bar)' });
    }
}

function axis(svg, x, top, bottom) {
    seg(svg, x, top, x, bottom, GRID, 2.5);
}

function axisLabels(svg, labels, textX) {
    labels.forEach(([y, text, major]) => {
        seg(svg, 1696, y, major ? 1706 : 1702, y, GRID, 1.5);
        if (text) {
            add(svg, 'text', { x: textX, y: y + 6.5, class: 'axis-text' }, text);
        }
    });
}

function drawMain() {
    const svg = document.getElementById('main-chart');
    gradient(svg, 'red-bar', '#6a0000', '#e80000');
    gradient(svg, 'green-bar', '#009000', '#00f000');

    [125, 199, 274, 348, 422, 497, 571].forEach(y => dotted(svg, y, 27, 1695));
    dotted(svg, 646, 27, 540);
    dotted(svg, 646, 1625, 1695);
    dotted(svg, 720, 27, 540);

    [34, 55, 114, 193, 352, 412, 690, 730, 947, 1166, 1186, 1207, 1306, 1345, 1386, 1405, 1425, 1524, 1603, 1625].forEach(x => {
        add(svg, 'rect', { x: x - 1.5, y: 91.500, width: 3, height: 3, fill: '#e000e0' });
    });

    // support boxes
    add(svg, 'rect', { x: 1192, y: 465, width: 503, height: 30, fill: '#808080', stroke: '#707070' });
    add(svg, 'rect', { x: 1173, y: 531, width: 522, height: 31, fill: '#808080', stroke: '#707070' });
    add(svg, 'rect', { x: 1610, y: 162, width: 85, height: 36, fill: '#808080' });

    dotted(svg, 273, 1258, 1345, '#e000e0', '5 4');
    dotted(svg, 356, 1385, 1428, '#e000e0', '5 4');
    dotted(svg, 347, 1501, 1626, '#e000e0', '5 4');

    const dots = [[273, 1218], [322, 1125], [322, 1178], [322, 1237], [372, 1030], [372, 1148], [372, 1088], [422, 948], [422, 1008], [422, 1070], [471, 935], [471, 997], [524, 800], [524, 858], [524, 925], [573, 733], [573, 800], [573, 868], [623, 675], [623, 742], [623, 813], [672, 620], [672, 692], [672, 765], [725, 580], [725, 652], [725, 723], [775, 620], [775, 692], [824, 593], [824, 665], [873, 490], [873, 566], [873, 638], [926, 625], [1025, 598], [1074, 507], [1074, 585], [1127, 565], [1176, 477], [1176, 552], [1226, 378], [1226, 458], [1226, 535], [1275, 427], [1275, 503], [1328, 305], [1328, 383], [1328, 463]];
    dots.forEach(([x, y]) => {
        add(svg, 'rect', { x: 1100 + x / 2.53 - 1, y: 220 + y / 3 - 1, width: 2, height: 2, fill: '#c8c800' });
    });

    // big candles on the right
    add(svg, 'rect', { x: 1140, y: 624, width: 16, height: 19, fill: '#000', stroke: '#c8c8c8', 'stroke-width': 1.5 });
    add(svg, 'rect', { x: 1143, y: 625, width: 10, height: 18, fill: '#00f000' });
    seg(svg, 1199, 422, 1217, 422, '#e02020');
    seg(svg, 1208, 422, 1208, 450, '#e02020');
    [
        [1168, 563, 611, 563, 624, 'r'],
        [1187, 495, 507, 495, 530, 'r'],
        [1228, 339, 373, 339, 463, 'r'],
        [1247, 273, 352, 249, 407, 'g'],
        [1266, 360, 394, 348, 415, 'g'],
        [1286, 357, 392, 327, 397, 'r'],
        [1307, 269, 366, 269, 397, 'r'],
        [1326, 273, 367, 273, 367, 'g'],
        [1346, 333, 393, 311, 419, 'r'],
        [1366, 306, 340, 246, 377, 'r'],
        [1387, 356, 399, 282, 399, 'c'],
        [1406, 355, 379, 336, 402, 'h'],
        [1426, 353, 384, 296, 411, 'c'],
        [1445, 315, 356, 300, 364, 'r'],
        [1466, 347, 406, 321, 406, 'c'],
        [1486, 373, 406, 363, 433, 'h'],
        [1505, 373, 379, 343, 402, 'h'],
        [1524, 337, 369, 323, 381, 'h'],
        [1545, 298, 334, 278, 406, 'h'],
        [1565, 330, 343, 312, 360, 'c'],
        [1585, 293, 336, 287, 340, 'h'],
        [1604, 198, 310, 198, 343, 'h'],
        [1625, 94, 162, 94, 162, 'r']
    ].forEach(c => candle(svg, c));

    const conv = ([x, y]) => [1100 + x / 2.53, 220 + y / 3];
    poly(svg, [[175, 1270], [245, 1190], [275, 1160], [340, 1030], [390, 930], [460, 825], [520, 735], [570, 665], [640, 580], [670, 545], [710, 515], [770, 475], [850, 425], [900, 400], [950, 385], [1060, 360], [1150, 330], [1250, 285], [1328, 225]].map(conv), '#f010f0', 3);
    poly(svg, [[335, 1270], [385, 1185], [430, 1115], [510, 1010], [575, 935], [650, 840], [680, 822], [770, 765], [850, 730], [880, 710], [950, 690], [1050, 670], [1150, 635], [1230, 610], [1280, 580], [1328, 545]].map(conv), '#f010f0', 3);

    add(svg, 'text', { x: 1196, y: 515, class: 'note-text' }, '10.01 - 10.43');
    add(svg, 'text', { x: 1177, y: 583, class: 'note-text' }, '9.10 - 9.54');
    add(svg, 'text', { x: 1613, y: 219, class: 'note-text' }, '14.00 - 14');
    add(svg, 'text', { x: 1545, y: 109, class: 'note-text' }, '15.40');
    poly(svg, [[1594, 103], [1622, 97]], '#b8b8b8', 1.5);
    poly(svg, [[1612, 95], [1622, 97], [1616, 103]], '#b8b8b8', 1.5);

    // old candles on the left, the middle part is covered in the original
    const green1 = [[58, 76], [90, 78], [125, 85], [158, 90], [190, 95], [225, 98], [240, 103], [260, 108], [290, 112], [325, 116], [360, 122], [390, 125], [425, 131], [555, 135], [720, 135], [755, 142]];
    const green2 = [[58, 265], [90, 267], [155, 270], [190, 278], [225, 285], [260, 292], [290, 295], [325, 300], [360, 305], [390, 311], [490, 312], [495, 316], [655, 316], [660, 320], [755, 320]];
    const low = ([x, y]) => [x / 1.668, 660 + y / 3];
    poly(svg, green1.map(low), '#00f000', 3);
    poly(svg, green2.map(low), '#00f000', 3);
    poly(svg, [[790, 135], [850, 135], [875, 120], [900, 115]].map(low), '#f010f0', 3);
    poly(svg, [[790, 321], [855, 320], [900, 302], [955, 285], [1020, 276]].map(low), '#f010f0', 3);
    dotted(svg, 700, 35, 540, '#e000e0', '3 4');
    dotted(svg, 751, 35, 1210, '#e000e0', '3 4');

    for (let i = 0; i < 26; i++) {
        const x = 35 + i * STEP;
        [703, 708 + (i % 3) * 4, 720, 729 + (i % 4) * 3, 745 + (i % 2) * 6].forEach(y => {
            if (i % 2 === 0 || y < 725) {
                add(svg, 'rect', { x: x - 0.5, y, width: 1.5, height: 1.5, fill: '#a8a800' });
            }
        });
    }

    [
        [35, 722, 727, 722, 727, 'h'],
        [56, 722, 730, 722, 730, 'c'],
        [76, 731, 738, 731, 741, 'c'],
        [115, 740, 747, 740, 749, 'c'],
        [135, 744, 748, 742, 748, 'c'],
        [155, 749, 757, 749, 757, 'c'],
        [194, 749, 755, 749, 755, 'h'],
        [234, 742, 748, 737, 748, 'h'],
        [294, 739, 741, 739, 743, 'r'],
        [314, 735, 742, 734, 742, 'h'],
        [354, 735, 738, 735, 738, 'r'],
        [374, 735, 738, 735, 741, 'c'],
        [413, 741, 744, 739, 744, 'c'],
        [433, 737, 743, 732, 747, 'h'],
        [473, 733, 737, 733, 738, 'h'],
        [493, 731, 733, 729, 736, 'r'],
        [512, 719, 733, 719, 737, 'h'],
        [532, 698, 719, 695, 722, 'h']
    ].forEach(c => {
        // thin bars here: plain colour instead of the gradient
        if (c[5] === 'r') {
            seg(svg, c[0], c[3], c[0], c[4], '#f02020');
            add(svg, 'rect', { x: c[0] - 6.5, y: c[1], width: 13, height: c[2] - c[1], fill: '#f02020' });
        } else {
            candle(svg, c);
        }
    });

    [
        [95, 738, 735, 741, '#48d8d8'],
        [215, 748, 740, 750, '#48d8d8'],
        [254, 740, 733, 743, '#48d8d8'],
        [273, 740, 737, 743, '#f02020'],
        [333, 738, 733, 738, '#e8e8e8'],
        [393, 742, 739, 745, '#e8e8e8'],
        [452, 737, 733, 741, '#e8e8e8']
    ].forEach(([x, y, t, b, color]) => {
        seg(svg, x - 6.5, y, x + 6.5, y, color, 2);
        seg(svg, x, t, x, b, color, 1.5);
    });

    add(svg, 'text', { x: 28, y: 768, class: 'note-dim' }, '用到未来数据');
    add(svg, 'text', { x: 155, y: 768, class: 'note-dim' }, '↖');
    add(svg, 'text', { x: 174, y: 768, class: 'note-dim' }, '6.46');
    add(svg, 'text', { x: 474, y: 756, class: 'note-white' }, '↖买点');

    add(svg, 'rect', { x: 204, y: 770, width: 19, height: 19, fill: '#1f4e79' });
    add(svg, 'text', { x: 213.500, y: 786, class: 'badge-text' }, '财');
    add(svg, 'path', { d: 'M510 772l4 5h-8z', fill: '#f01010' });
    add(svg, 'text', { x: 510, y: 789, class: 's-mark' }, 'S');
    add(svg, 'rect', { x: 1456, y: 771, width: 19, height: 19, fill: '#0a7a1a' });
    add(svg, 'text', { x: 1465.500, y: 787, class: 'badge-text' }, '跌');
    add(svg, 'rect', { x: 1615, y: 771, width: 19, height: 19, fill: '#8a5a1a' });
    add(svg, 'text', { x: 1624.500, y: 787, class: 'badge-text' }, '榜');

    // top right mini icons
    add(svg, 'path', { d: 'M1653 71l8 8-8 8-8-8z', fill: 'none', stroke: '#707070', 'stroke-width': 1.5 });
    add(svg, 'rect', { x: 1674, y: 72, width: 15, height: 14, rx: 2, fill: 'none', stroke: '#707070', 'stroke-width': 2 });
    add(svg, 'rect', { x: 1682, y: 73, width: 6, height: 12, fill: '#707070' });

    axis(svg, 1695, 63, 792);
    axisLabels(svg, [
        [125, '15.00', true], [165, '14.50', true], [199, '14.00', true], [238, '13.50', true],
        [274, '13.00', true], [313, '12.50', true], [349, '12.00', true], [388, '11.50', true],
        [423, '11.00', true], [461, '10.50', true], [497, '10.00', true], [537, '9.50', true],
        [571, '9.00', true], [646, '8.00', true], [685, '7.50', true], [719, '7.00', true]
    ], 1718);
    add(svg, 'rect', { x: 1696, y: 604, width: 76, height: 24, fill: '#000088', stroke: '#a00000', 'stroke-width': 2 });
    add(svg, 'text', { x: 1698, y: 622, class: 'note-text' }, '8.24');
}

function drawMacd() {
    const svg = document.getElementById('macd-chart');
    [869, 934, 998].forEach(y => dotted(svg, y, 27, 1695));

    const conv = ([x, y]) => [1000 + x / 2.063, 780 + y / 3];
    const zero = 998;

    // tiny histogram on the left
    for (let i = 0; i < 49; i++) {
        const x = 35 + i * STEP;
        const h = [6, 9, 14, 10, 16, 12, 8, 6, 10, 14, 7, 5][i % 12];
        if (i >= 25 && i <= 28) {
            seg(svg, x, zero, x, zero - 16, '#e02828');
        } else if (i >= 43) {
            seg(svg, x, zero, x, zero - 7, '#e02828');
        } else {
            seg(svg, x, zero, x, zero + h, '#40d0d0');
        }
    }
    [[305, 620], [346, 555], [386, 475], [429, 385], [469, 290], [510, 262], [550, 293], [590, 317], [633, 293], [674, 370], [714, 420], [754, 450], [798, 550], [838, 595], [1247, 650], [1290, 540]].forEach(([x, y]) => {
        const p = conv([x, y]);
        seg(svg, p[0], p[1], p[0], zero, '#e02828');
    });
    [[18, 662], [58, 680], [101, 685], [141, 680], [182, 676], [222, 680], [265, 667], [962, 720], [1002, 748], [1042, 765], [1082, 757], [1125, 725], [1166, 738], [1206, 716]].forEach(([x, y]) => {
        const p = conv([x, y]);
        seg(svg, p[0], zero, p[0], p[1], '#40d0d0');
    });

    const whiteLeft = [[33, 997], [100, 1002], [160, 1010], [220, 1012], [300, 1010], [380, 1008], [470, 1000], [530, 988], [600, 984], [720, 984], [780, 990], [840, 1000], [900, 995], [950, 982]];
    const yellowLeft = [[33, 994], [100, 998], [200, 1004], [300, 1006], [400, 1004], [470, 997], [530, 992], [600, 988], [700, 988], [780, 994], [840, 996], [900, 992], [960, 986]];
    const white = [[0, 608], [50, 622], [90, 632], [125, 629], [165, 633], [205, 638], [240, 637], [270, 630], [310, 597], [350, 555], [390, 480], [430, 410], [465, 335], [505, 258], [585, 200], [633, 137], [680, 142], [750, 124], [800, 160], [840, 175], [875, 205], [925, 208], [960, 248], [1000, 268], [1040, 298], [1100, 304], [1130, 299], [1165, 317], [1205, 313], [1250, 270], [1285, 213]].map(conv);
    const yellow = [[0, 605], [80, 612], [120, 620], [200, 622], [280, 622], [340, 605], [385, 582], [430, 548], [470, 505], [510, 450], [550, 408], [590, 365], [640, 318], [680, 280], [750, 228], [790, 214], [860, 206], [925, 206], [1000, 228], [1080, 255], [1180, 278], [1240, 283], [1285, 268]].map(conv);
    poly(svg, whiteLeft.concat(white), '#d0d0d0', 1.800);
    poly(svg, yellowLeft.concat(yellow), '#d8d800', 2);

    axis(svg, 1695, 792, 1041);
    axisLabels(svg, [[869, '1.00', true], [901, '', false], [934, '0.50', true]], 1728);
}

function drawVol() {
    const svg = document.getElementById('vol-chart');
    [1088, 1136, 1184, 1232].forEach(y => dotted(svg, y, 27, 1695));

    const bottom = 1281;
    const bars = [
        [708, 'r'], [703, 'c'], [703, 'c'], [708, 'c'], [708, 'c'], [708, 'c'], [710, 'c'], [710, 'r'], [710, 'r'], [710, 'c'],
        [703, 'r'], [703, 'c'], [703, 'r'], [705, 'r'], [705, 'r'], [708, 'c'], [703, 'r'], [708, 'c'], [703, 'c'], [708, 'c'],
        [703, 'r'], [698, 'r'], [706, 'r'], [706, 'r'], [658, 'r'], [577, 'r'], [635, 'r'], [671, 'r'], [658, 'r'], [642, 'c'],
        [680, 'r'], [683, 'c'], [684, 'r'], [688, 'c'], [685, 'r'], [692, 'c'], [684, 'c'], [680, 'c'], [701, 'c'], [698, 'r'],
        [701, 'c'], [600, 'r'], [532, 'r'], [612, 'c'], [665, 'c'], [676, 'r'], [665, 'c'], [684, 'c'], [684, 'c'],
        [675, 'c'], [692, 'c'], [695, 'r'], [680, 'r'], [697, 'c'], [690, 'c'], [662, 'r'], [618, 'r'], [560, 'r'], [447, 'r'],
        [608, 'r'], [90, 'r'], [94, 'c'], [270, 'c'], [212, 'r'], [222, 'r'], [266, 'c'], [384, 'r'], [348, 'r'], [467, 'c'],
        [420, 'r'], [445, 'c'], [375, 'r'], [377, 'c'], [465, 'r'], [505, 'r'], [470, 'r'], [460, 'r'], [477, 'c'], [435, 'r'],
        [415, 'r'], [518, 'r']
    ];
    bars.forEach(([zoomTop, kind], i) => {
        const x = 35 + i * STEP;
        const top = 1040 + zoomTop / 3;
        if (kind === 'c') {
            add(svg, 'rect', { x: x - 7, y: top, width: 14, height: bottom - top, fill: '#54ffff' });
        } else {
            add(svg, 'rect', { x: x - 6, y: top, width: 12, height: bottom - top, fill: '#000', stroke: '#e83030', 'stroke-width': 1.800 });
        }
    });

    const l = ([x, y]) => [x / 1.568, 1040 + y / 3];
    const r = ([x, y]) => [1000 + x / 2.063, 1040 + y / 3];
    const ma5 = [[55, 705], [150, 708], [225, 706], [300, 708], [440, 706], [505, 705], [780, 703], [800, 695], [830, 665], [860, 660], [950, 636], [985, 655], [1040, 665], [1110, 680], [1240, 692], [1300, 695], [1340, 670], [1400, 630], [1450, 618], [1500, 640], [1520, 660], [1568, 680]].map(l)
        .concat([[0, 680], [80, 682], [130, 686], [205, 690], [265, 685], [300, 670], [350, 640], [385, 595], [430, 580], [460, 480], [495, 400], [510, 360], [565, 285], [595, 250], [633, 178], [670, 210], [715, 270], [750, 283], [800, 340], [880, 415], [915, 410], [960, 420], [1000, 415], [1040, 432], [1080, 438], [1125, 460], [1165, 475], [1205, 470], [1245, 452], [1285, 460]].map(r));
    const ma10 = [[55, 695], [130, 700], [140, 706], [225, 708], [440, 708], [790, 708], [850, 683], [950, 668], [1000, 662], [1100, 660], [1160, 672], [1250, 683], [1310, 690], [1340, 680], [1400, 658], [1440, 655], [1568, 652]].map(l)
        .concat([[0, 650], [65, 650], [115, 662], [140, 672], [205, 686], [265, 680], [305, 676], [350, 660], [385, 642], [430, 635], [470, 565], [510, 510], [555, 465], [595, 420], [670, 340], [760, 294], [800, 298], [835, 282], [870, 305], [920, 342], [965, 352], [1000, 378], [1040, 407], [1085, 425], [1130, 433], [1165, 447], [1245, 442], [1285, 452]].map(r));
    poly(svg, ma5, '#d8d800', 1.800);
    poly(svg, ma10, '#e000e0', 1.800);

    axis(svg, 1695, 1041, 1285);
    axisLabels(svg, [
        [1088, '80000', true], [1112, '', false], [1136, '60000', true], [1160, '', false],
        [1184, '40000', true], [1208, '', false], [1232, '20000', true]
    ], 1712);
    add(svg, 'rect', { x: 1696, y: 1262, width: 38, height: 22, fill: 'none', stroke: GRID, 'stroke-width': 1.500 });
    add(svg, 'text', { x: 1699, y: 1280, class: 'axis-text' }, 'X10');
}

function fillTrades() {
    const rows = [
        ['14:54', '0.2', 1], ['14:54', '7.5', 1], ['14:54', '0.5', 1], ['14:54', '1.1', 1], ['14:54', '0.2', 1], ['14:54', '0.3', 1],
        ['14:54', '0.3', 1], ['14:54', '0.9', 1], ['14:54', '1.8', 1], ['14:55', '1.4', 1], ['14:55', '0.6', 2], ['14:55', '1.5', 1],
        ['14:55', '1.1', 1], ['14:55', '0.8', 1], ['14:56', '0.3', 1], ['14:56', '3.1', 1], ['14:56', '4.6', 2], ['14:56', '0.3', 1],
        ['14:56', '1.5', 1], ['14:56', '4.9', 2], ['14:56', '1.7', 1], ['14:56', '3.1', 1], ['15:00', '10.2', 9]
    ];
    const box = document.getElementById('trades');
    rows.forEach(([time, vol, cnt], i) => {
        const row = document.createElement('div');
        row.className = 'q-row';
        const side = i === rows.length - 1 ? '' : 'S';
        row.innerHTML = `<b class="time">${time}</b><b class="price">15.40</b><b class="vol">${vol}<em>万</em></b><b class="side">${side}</b><b class="cnt">${cnt}</b>`;
        box.appendChild(row);
    });
}

drawMain();
drawMacd();
drawVol();
fillTrades();
```
